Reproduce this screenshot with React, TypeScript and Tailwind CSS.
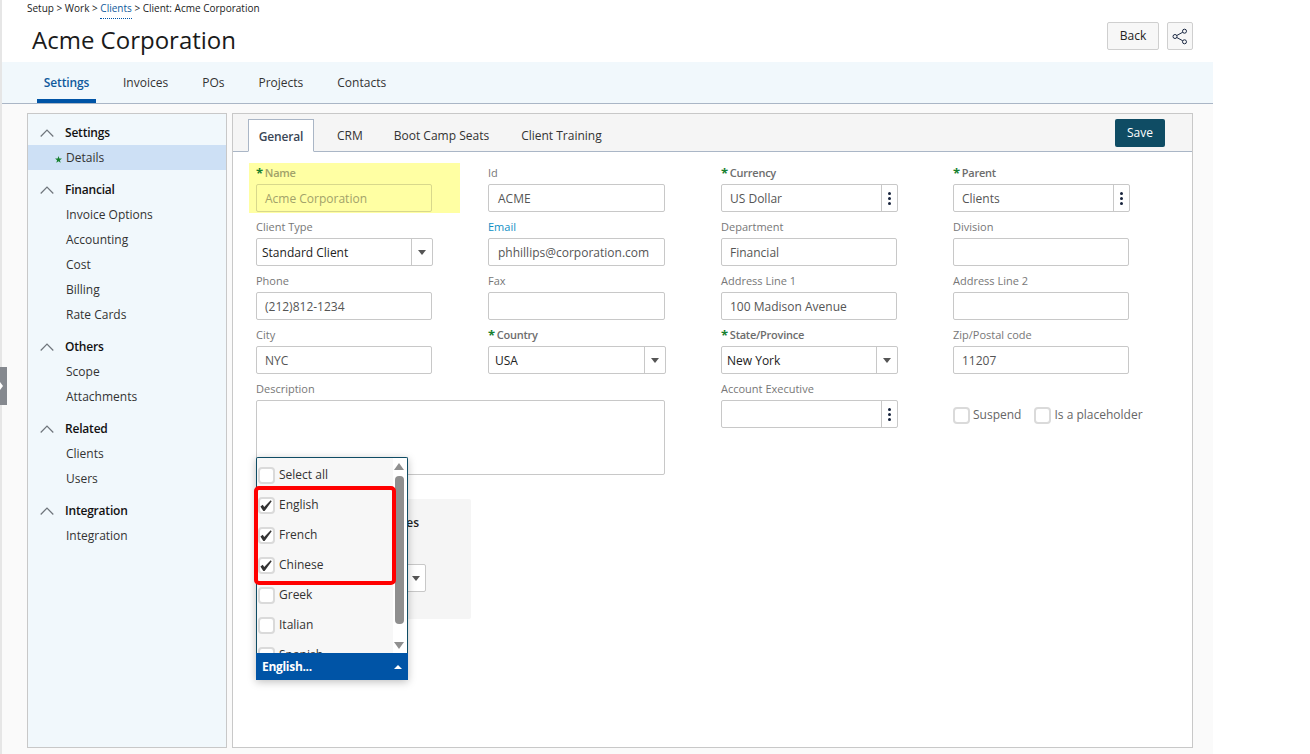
import React from "react";

const font = { fontFamily: '"Open Sans", sans-serif' };

function Chevron() {
  return (
    <svg width="14" height="8" viewBox="0 0 14 8" fill="none" className="shrink-0" aria-hidden>
      <path d="M0.7 7.5 L7 1 L13.3 7.5" stroke="#6f757b" strokeWidth="1.2" />
    </svg>
  );
}

function Caret({ color = "#555" }: { color?: string }) {
  return <span className="block w-0 h-0 border-l-[4.5px] border-r-[4.5px] border-t-[5px] border-l-transparent border-r-transparent" style={{ borderTopColor: color }} />;
}

function Dots() {
  return (
    <span className="flex flex-col gap-[2px] items-center">
      <span className="w-[3px] h-[3px] rounded-full bg-[#17233c]" />
      <span className="w-[3px] h-[3px] rounded-full bg-[#17233c]" />
      <span className="w-[3px] h-[3px] rounded-full bg-[#17233c]" />
    </span>
  );
}

function Label({ text, req, color }: { text: string; req?: boolean; color?: string }) {
  return (
    <div className={`h-[18px] flex items-start text-[11px] leading-[14px] ${req ? "font-semibold text-[#6d6d6d] tracking-[-0.25px]" : "text-[#777]"}`} style={color ? { color } : undefined}>
      {req && <span className="text-[#17802f] font-bold text-[13px] leading-[14px] mr-[2px]">*</span>}
      {text}
    </div>
  );
}

function Input({ value = "", w = "w-[176px]", pad = "pl-[8px]" }: { value?: string; w?: string; pad?: string }) {
  return (
    <div className={`${w} ${pad} h-[28px] border border-[#c8c8c8] rounded-[2px] bg-white pt-[2px] flex items-center text-[12px] text-[#555]`}>
      {value}
    </div>
  );
}

function Picker({ value, kind, w = "w-[177px]", pad = "pl-[5px]" }: { value: string; kind: "select" | "dots"; w?: string; pad?: string }) {
  return (
    <div className={`${w} h-[28px] border border-[#c8c8c8] rounded-[2px] bg-white flex items-center text-[12px] text-[#222]`}>
      <div className={`flex-1 min-w-0 pt-[2px] ${kind === "dots" ? "pl-[8px] text-[#555]" : pad}`}>{value}</div>
      <div className={`${kind === "select" ? "w-[21px]" : "w-[16px]"} h-full border-l border-[#c8c8c8] flex items-center justify-center`}>
        {kind === "select" ? <Caret /> : <Dots />}
      </div>
    </div>
  );
}

function Field({ label, req, color, children }: { label: string; req?: boolean; color?: string; children: React.ReactNode }) {
  return (
    <div>
      <Label text={label} req={req} color={color} />
      {children}
    </div>
  );
}

function Box({ checked }: { checked?: boolean }) {
  return (
    <span className="w-[17px] h-[17px] shrink-0 border-2 border-[#dadada] rounded-[4px] bg-white flex items-center justify-center">
      {checked && (
        <svg width="15" height="15" viewBox="0 0 15 15" className="-ml-[1px] mt-[1px]" aria-hidden>
          <path d="M1.5 8.5 L4 6.8 L5.6 9 L12.5 2 L13.6 3 L6 13.5 L4.6 13.5 Z" fill="#333" />
        </svg>
      )}
    </span>
  );
}

const sections: { title: string; items: string[] }[] = [
  { title: "Settings", items: ["Details"] },
  { title: "Financial", items: ["Invoice Options", "Accounting", "Cost", "Billing", "Rate Cards"] },
  { title: "Others", items: ["Scope", "Attachments"] },
  { title: "Related", items: ["Clients", "Users"] },
  { title: "Integration", items: ["Integration"] },
];

export default function App() {
  return (
    <div className="w-[1310px] h-[754px] overflow-hidden bg-white flex text-[#222] relative" style={font}>
      <div className="w-[2px] bg-[#e6e6e6] shrink-0" />
      <div className="w-[1211px] shrink-0 flex flex-col">
        {/* header */}
        <header className="h-[62px] relative shrink-0 bg-white pl-[25px]">
          <div className="h-[23px] pt-[2px] text-[10px] leading-[13px] text-[#222]">
            Setup &gt; Work &gt; <span className="text-[#0f5a9c] border-b border-dotted border-[#0054a6] pb-[3px]">Clients</span> &gt; Client: Acme Corporation
          </div>
          <h1 className="ml-[5px] text-[24px] leading-[34px] font-normal text-[#1a1a1a]">Acme Corporation</h1>
          <div className="absolute top-[22px] right-[20px] flex gap-[8px]">
            <button className="w-[52px] h-[28px] border border-[#cfcfcf] rounded-[2px] bg-[#f7f7f7] text-[12px] text-[#222]">Back</button>
            <button className="w-[26px] h-[28px] border border-[#cfcfcf] rounded-[2px] bg-[#f7f7f7] flex items-center justify-center" aria-label="Share">
              <svg width="16" height="17" viewBox="0 0 16 17" fill="none" stroke="#1d2a44" strokeWidth="1">
                <circle cx="12.5" cy="3.2" r="2" />
                <circle cx="12.5" cy="13.8" r="2" />
                <circle cx="3" cy="8.5" r="2" />
                <path d="M4.8 7.5 L10.8 4.2 M4.8 9.5 L10.8 12.8" />
              </svg>
            </button>
          </div>
        </header>

        {/* top tabs */}
        <nav className="h-[42px] shrink-0 bg-[#f1f8fc] border-b-[1px] border-[#aab6c6] flex pl-[35px] gap-[20px] text-[12px]">
          {["Settings", "Invoices", "POs", "Projects", "Contacts"].map((t, i) => (
            <div key={t} className={`h-[41px] flex items-center ${i === 0 ? "w-[59px] justify-center border-b-[4px] border-[#0054a6] text-[#0f5a9c] font-semibold tracking-[-0.15px] pt-[4px]" : "px-[7px] text-[#333]"}`}>
              {t}
            </div>
          ))}
        </nav>

        {/* body */}
        <div className="flex-1 min-h-0 bg-[#fafafa] pt-[9px] pl-[25px] pr-[20px] pb-[6px] flex gap-[5px]">
          <aside className="w-[200px] shrink-0 bg-[#f1f8fc] border border-[#c8c8c8] pt-[6px] text-[12px]">
            {sections.map((s) => (
              <div key={s.title} className="mb-[7px]">
                <div className="h-[25px] flex items-center pl-[12px] gap-[11px] font-semibold tracking-[-0.2px] text-[#111]">
                  <Chevron />
                  {s.title}
                </div>
                {s.items.map((it) => (
                  <div key={it} className={`h-[25px] flex items-center pl-[38px] text-[#333] relative ${it === "Details" ? "bg-[#cde0f5]" : ""}`}>
                    {it === "Details" && (
                      <svg width="7" height="7" viewBox="0 0 10 10" className="absolute left-[27px] top-[11px]" aria-hidden>
                        <path d="M5 0 L6.2 3.6 L10 3.6 L7 5.9 L8.1 9.6 L5 7.4 L1.9 9.6 L3 5.9 L0 3.6 L3.8 3.6 Z" fill="#17802f" />
                      </svg>
                    )}
                    {it}
                  </div>
                ))}
              </div>
            ))}
          </aside>

          <main className="flex-1 min-w-0 border border-[#c8c8c8] bg-white flex flex-col">
            <div className="h-[38px] shrink-0 bg-[#f5f5f5] border-b border-[#aab6c6] flex items-end pl-[15px] pr-[27px] text-[12px] relative">
              <div className="h-[33px] w-[66px] -mb-px pt-[2px] bg-white border border-[#aab6c6] border-b-white flex items-center justify-center font-semibold tracking-[-0.15px] text-[#3a4656]">General</div>
              <div className="h-[32px] pt-[2px] flex items-center ml-[23px] text-[#333]">CRM</div>
              <div className="h-[32px] pt-[2px] flex items-center ml-[31px] text-[#333]">Boot Camp Seats</div>
              <div className="h-[32px] pt-[2px] flex items-center ml-[32px] text-[#333]">Client Training</div>
              <button className="absolute right-[27px] top-[5px] w-[50px] h-[28px] rounded-[2px] bg-[#0f4c64] text-white text-[12px]">Save</button>
            </div>

            <div className="flex-1 min-h-0 relative pt-[14px] pl-[23px]">
              <div className="grid grid-cols-[232px_233px_232px_240px] gap-y-[8px]">
                <div className="relative">
                  <div className="absolute -left-[7px] -top-[3px] w-[211px] h-[50px] bg-[#ffffa3]" />
                  <div className="relative">
                    <Label text="Name" req color="#a2a26a" />
                    <div className="w-[176px] h-[28px] border border-[#d8d88c] rounded-[2px] bg-[#ffffa3] pl-[8px] pt-[2px] flex items-center text-[12px] text-[#a2a26a]">Acme Corporation</div>
                  </div>
                </div>
                <Field label="Id"><Input value="ACME" w="w-[177px]" pad="pl-[9px]" /></Field>
                <Field label="Currency" req><Picker value="US Dollar" kind="dots" /></Field>
                <Field label="Parent" req><Picker value="Clients" kind="dots" /></Field>

                <Field label="Client Type"><Picker value="Standard Client" kind="select" /></Field>
                <Field label="Email" color="#0f8fc4"><Input value="phhillips@corporation.com" w="w-[177px]" pad="pl-[9px]" /></Field>
                <Field label="Department"><Input value="Financial" /></Field>
                <Field label="Division"><Input /></Field>

                <Field label="Phone"><Input value="(212)812-1234" /></Field>
                <Field label="Fax"><Input w="w-[177px]" /></Field>
                <Field label="Address Line 1"><Input value="100 Madison Avenue" /></Field>
                <Field label="Address Line 2"><Input /></Field>

                <Field label="City"><Input value="NYC" /></Field>
                <Field label="Country" req><Picker value="USA" kind="select" w="w-[178px]" pad="pl-[6px]" /></Field>
                <Field label="State/Province" req><Picker value="New York" kind="select" /></Field>
                <Field label="Zip/Postal code"><Input value="11207" /></Field>

                <div className="col-span-2">
                  <Label text="Description" />
                  <div className="w-[409px] h-[75px] border border-[#c8c8c8] rounded-[2px] bg-white" />
                </div>
                <Field label="Account Executive"><Picker value="" kind="dots" /></Field>
                <div className="flex items-start gap-[13px] pt-[24px] text-[12px] text-[#666]">
                  <label className="flex items-center gap-[3px]"><Box />Suspend</label>
                  <label className="flex items-center gap-[3px]"><Box />Is a placeholder</label>
                </div>
              </div>

              {/* languages box */}
              <div className="mt-[24px] w-[215px] h-[120px] bg-[#f5f5f5] rounded-[2px] pt-[16px]">
                <div className="text-right pr-[52px] text-[12px] font-semibold text-[#222] leading-[16px]">Languages</div>
                <div className="mt-[33px] ml-[20px] w-[150px] h-[28px] border border-[#c8c8c8] rounded-[2px] bg-white flex items-center justify-end pr-[5px]">
                  <Caret />
                </div>
              </div>

              {/* open multi-select */}
              <div className="absolute left-[23px] top-[305px] w-[152px] shadow-[0_2px_8px_rgba(0,0,0,0.25)]">
                <div className="relative h-[196px] border border-b-0 border-[#0f4c64] rounded-t-[2px] bg-[#f7f7f7] overflow-hidden flex">
                  <ul className="flex-1 pt-[2px] pl-[1px] text-[12px] text-[#333]">
                    {[
                      ["Select all", false],
                      ["English", true],
                      ["French", true],
                      ["Chinese", true],
                      ["Greek", false],
                      ["Italian", false],
                      ["Spanish", false],
                    ].map(([t, c]) => (
                      <li key={t as string} className="h-[30px] flex items-center gap-[4px]">
                        <Box checked={c as boolean} />
                        {t as string}
                      </li>
                    ))}
                  </ul>
                  <div className="w-[14px] shrink-0 bg-white flex flex-col items-center pt-[5px] pr-[2px]">
                    <span className="w-0 h-0 border-l-[5px] border-r-[5px] border-b-[7px] border-l-transparent border-r-transparent border-b-[#8f8f8f]" />
                    <span className="mt-[6px] w-[9px] h-[148px] rounded-[4px] bg-[#8f8f8f]" />
                    <span className="mt-[18px] w-0 h-0 border-l-[5px] border-r-[5px] border-t-[7px] border-l-transparent border-r-transparent border-t-[#8f8f8f]" />
                  </div>
                </div>
                <div className="h-[27px] bg-[#0054a6] text-white text-[12px] font-bold tracking-[-0.3px] flex items-center justify-between pl-[6px] pr-[6px]">
                  English...
                  <span className="w-0 h-0 border-l-[4px] border-r-[4px] border-b-[4px] border-l-transparent border-r-transparent border-b-white" />
                </div>
                <div className="absolute -left-[2px] top-[29px] w-[142px] h-[99px] border-[4px] border-[#f00] rounded-[5px]" />
              </div>
            </div>
          </main>
        </div>
      </div>

      {/* collapse handle */}
      <div className="absolute left-0 top-[367px] w-[7px] h-[38px] bg-[#85898f] flex items-center">
        <span className="w-0 h-0 border-l-[3px] border-y-[4px] border-y-transparent border-l-white" />
      </div>
    </div>
  );
}
